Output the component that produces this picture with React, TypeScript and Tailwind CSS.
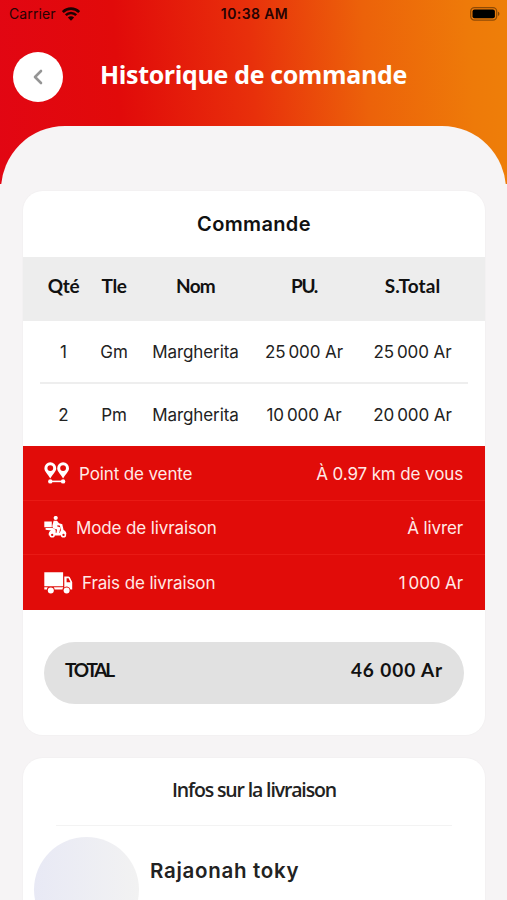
import React from 'react';
import {ChevronLeft} from "lucide-react";

interface OrderLine {
    qty: number
    size: string
    name: string
    price: string
    subtotal: string
}

const lines: OrderLine[] = [
    {qty: 1, size: "Gm", name: "Margherita", price: "25\u2009000 Ar", subtotal: "25\u2009000 Ar"},
    {qty: 2, size: "Pm", name: "Margherita", price: "10\u2009000 Ar", subtotal: "20\u2009000 Ar"},
]

const WifiIcon = () => (
    <svg className="w-[18px] h-[14px]" viewBox="0 0 18 14" fill="none" stroke="#1c0202">
        <path d="M0.8 5C5.3 0.5 12.7 0.5 17.2 5" strokeWidth="2.7"/>
        <path d="M3.8 8.2C6.7 5.2 11.3 5.2 14.2 8.2" strokeWidth="2.5"/>
        <path d="M9 13.8L5.9 10.6C7.6 8.9 10.4 8.9 12.1 10.6Z" fill="#1c0202" stroke="none"/>
    </svg>
)

const BatteryIcon = () => (
    <svg className="w-[30px] h-[14px]" viewBox="0 0 30 14">
        <rect x="0.7" y="0.7" width="26" height="12.4" rx="3.8" fill="none" stroke="#000" strokeOpacity="0.4" strokeWidth="1.3"/>
        <rect x="2.5" y="2.5" width="22.4" height="8.8" rx="2" fill="#000"/>
        <path d="M28 4.8C29.9 5.4 29.9 8.4 28 9Z" fill="#000" fillOpacity="0.45"/>
    </svg>
)

const PinsIcon = () => (
    <svg className="w-[26px] h-[22px]" viewBox="0 0 26 22" fill="#fff">
        <path fillRule="evenodd" d="M6.3 0.3A5.9 5.9 0 0 1 12.2 6.2C12.2 9.6 8.7 12 6.3 16.4C3.9 12 0.4 9.6 0.4 6.2A5.9 5.9 0 0 1 6.3 0.3ZM6.3 3.2A2.9 2.9 0 1 0 6.3 9A2.9 2.9 0 1 0 6.3 3.2Z"/>
        <path fillRule="evenodd" d="M19.1 0.3A5.9 5.9 0 0 1 25 6.2C25 9.6 21.5 12 19.1 16.4C16.7 12 13.2 9.6 13.2 6.2A5.9 5.9 0 0 1 19.1 0.3ZM19.1 3.2A2.9 2.9 0 1 0 19.1 9A2.9 2.9 0 1 0 19.1 3.2Z"/>
        <circle cx="6.3" cy="19.4" r="2.2"/>
        <circle cx="19.1" cy="19.4" r="2.2"/>
        <path d="M6.3 18.6H19.1V20.2H6.3Z"/>
    </svg>
)

const ScooterIcon = () => (
    <svg className="w-[23px] h-[22px]" viewBox="0 0 23 22" fill="#fff">
        <circle cx="11.7" cy="2" r="2.1"/>
        <path d="M0.3 5.6H7.8V11.3H0.3Z"/>
        <path d="M9.6 4.8L13 4.7L15 7.2L17.6 8L17.2 9.8L13.6 9.2L13 10.2L16.4 11.6L15.2 17.2H12.3L13.1 13.6L9.2 12.4L8.2 10.2Z"/>
        <path d="M1.6 12.1H8.6L11.6 13.8L11.8 17H15.6L16.9 14.3L15.6 8.3L18.2 7.9L19.6 14C21.5 14.8 22.4 16.4 22.4 18.2H18L16.4 19.6H4.8C4.3 17 5.2 15.4 7 14.5L1.6 13.8Z"/>
        <circle cx="8.2" cy="18.9" r="1.9" fill="#e10c09" stroke="#fff" strokeWidth="1.5"/>
        <circle cx="19.5" cy="18.9" r="1.9" fill="#e10c09" stroke="#fff" strokeWidth="1.5"/>
    </svg>
)

const TruckIcon = () => (
    <svg className="w-[29px] h-[23px]" viewBox="0 0 29 23" fill="#fff">
        <path d="M0.3 1.2H19.1V15.2H0.3Z"/>
        <path fillRule="evenodd" d="M20.3 5.5H24.3C25 5.5 25.5 5.8 25.8 6.3L28.2 11V18.4H26.4A3.6 3.6 0 0 0 20.3 16.6ZM22.6 7.3V11.2H26.5L24.6 7.3Z"/>
        <path d="M0.3 16.2H3.8A4 4 0 0 0 2.9 18.4H0.3ZM9.7 16.2H19.4A4 4 0 0 0 18.5 18.4H10.6A4 4 0 0 0 9.7 16.2Z"/>
        <circle cx="6.8" cy="19.4" r="3"/>
        <circle cx="22.6" cy="19.4" r="3"/>
    </svg>
)

const deliveryRows = [
    {icon: <PinsIcon/>, label: "Point de vente", value: "À 0.97 km de vous"},
    {icon: <ScooterIcon/>, label: "Mode de livraison", value: "À livrer"},
    {icon: <TruckIcon/>, label: "Frais de livraison", value: "1\u2009000 Ar"},
]

const Header = () => (
    <header className="flex flex-col h-[184px] overflow-hidden bg-[linear-gradient(86deg,#e20613_0%,#e10a0a_24%,#e8300b_50%,#ec620a_72%,#ee7a09_92%,#ee7f09_100%)]">
        <div className="grid grid-cols-3 items-center h-[27px] shrink-0 pl-[9px] pr-[7px] text-[14px] text-[#260303]">
            <div className="flex items-center gap-[6px]">
                <span className="tracking-[0.1px]">Carrier</span>
                <WifiIcon/>
            </div>
            <span className="text-center font-semibold tracking-[0.4px]">10:38 AM</span>
            <div className="flex justify-end"><BatteryIcon/></div>
        </div>
        <div className="flex items-center h-[99px] shrink-0 pl-[13px]">
            <button className="flex items-center justify-center w-[50px] h-[50px] rounded-full bg-white">
                <ChevronLeft className="w-[24px] h-[24px] text-[#959595]" strokeWidth={2.6}/>
            </button>
            <h1 className="ml-[37px] pb-[3px] whitespace-nowrap font-['Open_Sans'] text-[25px] font-bold tracking-[-0.35px] text-white">
                Historique de commande
            </h1>
        </div>
        <div className="h-[80px] shrink-0 mx-px rounded-t-[64px] bg-[#f6f4f5]"/>
    </header>
)

const App = () => {
    return (
        <div className="w-full h-[900px] overflow-hidden bg-[#f6f4f5] font-['Inter',sans-serif] text-[#222]">
            <Header/>
            <main className="flex flex-col gap-[23px] pt-[7px] pl-[23px] pr-[22px]">
                <section className="h-[544px] rounded-[20px] bg-white overflow-hidden ring-1 ring-[#f3f1f2]">
                    <h2 className="flex items-center justify-center h-[66px] text-[20px] font-semibold tracking-[0.35px] text-[#111]">Commande</h2>
                    <div className="grid grid-cols-[47px_54px_109px_108px_109px] h-[64px] pl-[17px] pt-[16px] bg-[#ededed] text-center font-['Lato'] text-[19px] leading-[26px] font-bold text-[#111]">
                        <span className="tracking-[-0.4px]">Qté</span>
                        <span className="tracking-[-0.4px]">Tle</span>
                        <span className="tracking-[-0.8px]">Nom</span>
                        <span className="tracking-[-1.3px]">PU.</span>
                        <span className="tracking-[0.1px]">S.Total</span>
                    </div>
                    <div className="mx-[17px] h-[125px] divide-y-2 divide-[#eeeeee]">
                        {lines.map((line, i) => (
                            <div key={i} className="grid grid-cols-[47px_54px_109px_108px_109px] items-center h-[63px] first:pt-[2px] text-center text-[17px] tracking-[-0.1px]">
                                <span>{line.qty}</span>
                                <span>{line.size}</span>
                                <span>{line.name}</span>
                                <span>{line.price}</span>
                                <span>{line.subtotal}</span>
                            </div>
                        ))}
                    </div>
                    <div className="h-[164px] divide-y divide-[#e91a15] bg-[#e10c09] text-[17px] tracking-[-0.12px] text-[#ffe9e6]">
                        {deliveryRows.map((row) => (
                            <div key={row.label} className="flex items-center justify-between h-[54.67px] pl-[21px] pr-[22px]">
                                <div className="flex items-center gap-[9px]">
                                    {row.icon}
                                    <span className="pt-[3px]">{row.label}</span>
                                </div>
                                <span className="pt-[3px]">{row.value}</span>
                            </div>
                        ))}
                    </div>
                    <div className="flex justify-between h-[62px] mt-[32px] mx-[21px] pt-[15px] px-[21px] rounded-full bg-[#e1e1e1] font-['Lato'] text-[19px] leading-[26px] font-bold text-[#111]">
                        <span className="tracking-[-2.2px]">TOTAL</span>
                        <span className="tracking-[0.9px]">46 000 Ar</span>
                    </div>
                </section>
                <section className="h-[200px] rounded-[20px] bg-white ring-1 ring-[#f3f1f2]">
                    <h2 className="flex justify-center h-[68px] mx-[33px] pt-[18px] border-b border-[#f3f3f3] font-['Open_Sans'] text-[19.5px] leading-[28px] font-semibold tracking-[-1.15px]">
                        Infos sur la livraison
                    </h2>
                    <div className="flex pl-[11px] pt-[11px] gap-[11px]">
                        <div className="w-[105px] h-[105px] rounded-full bg-linear-to-r from-[#e8e9f5] to-[#f2f2f2]"/>
                        <span className="pt-[20px] text-[20.5px] leading-[28px] font-semibold tracking-[0.7px]">Rajaonah toky</span>
                    </div>
                </section>
            </main>
        </div>
    );
};

export default App;
